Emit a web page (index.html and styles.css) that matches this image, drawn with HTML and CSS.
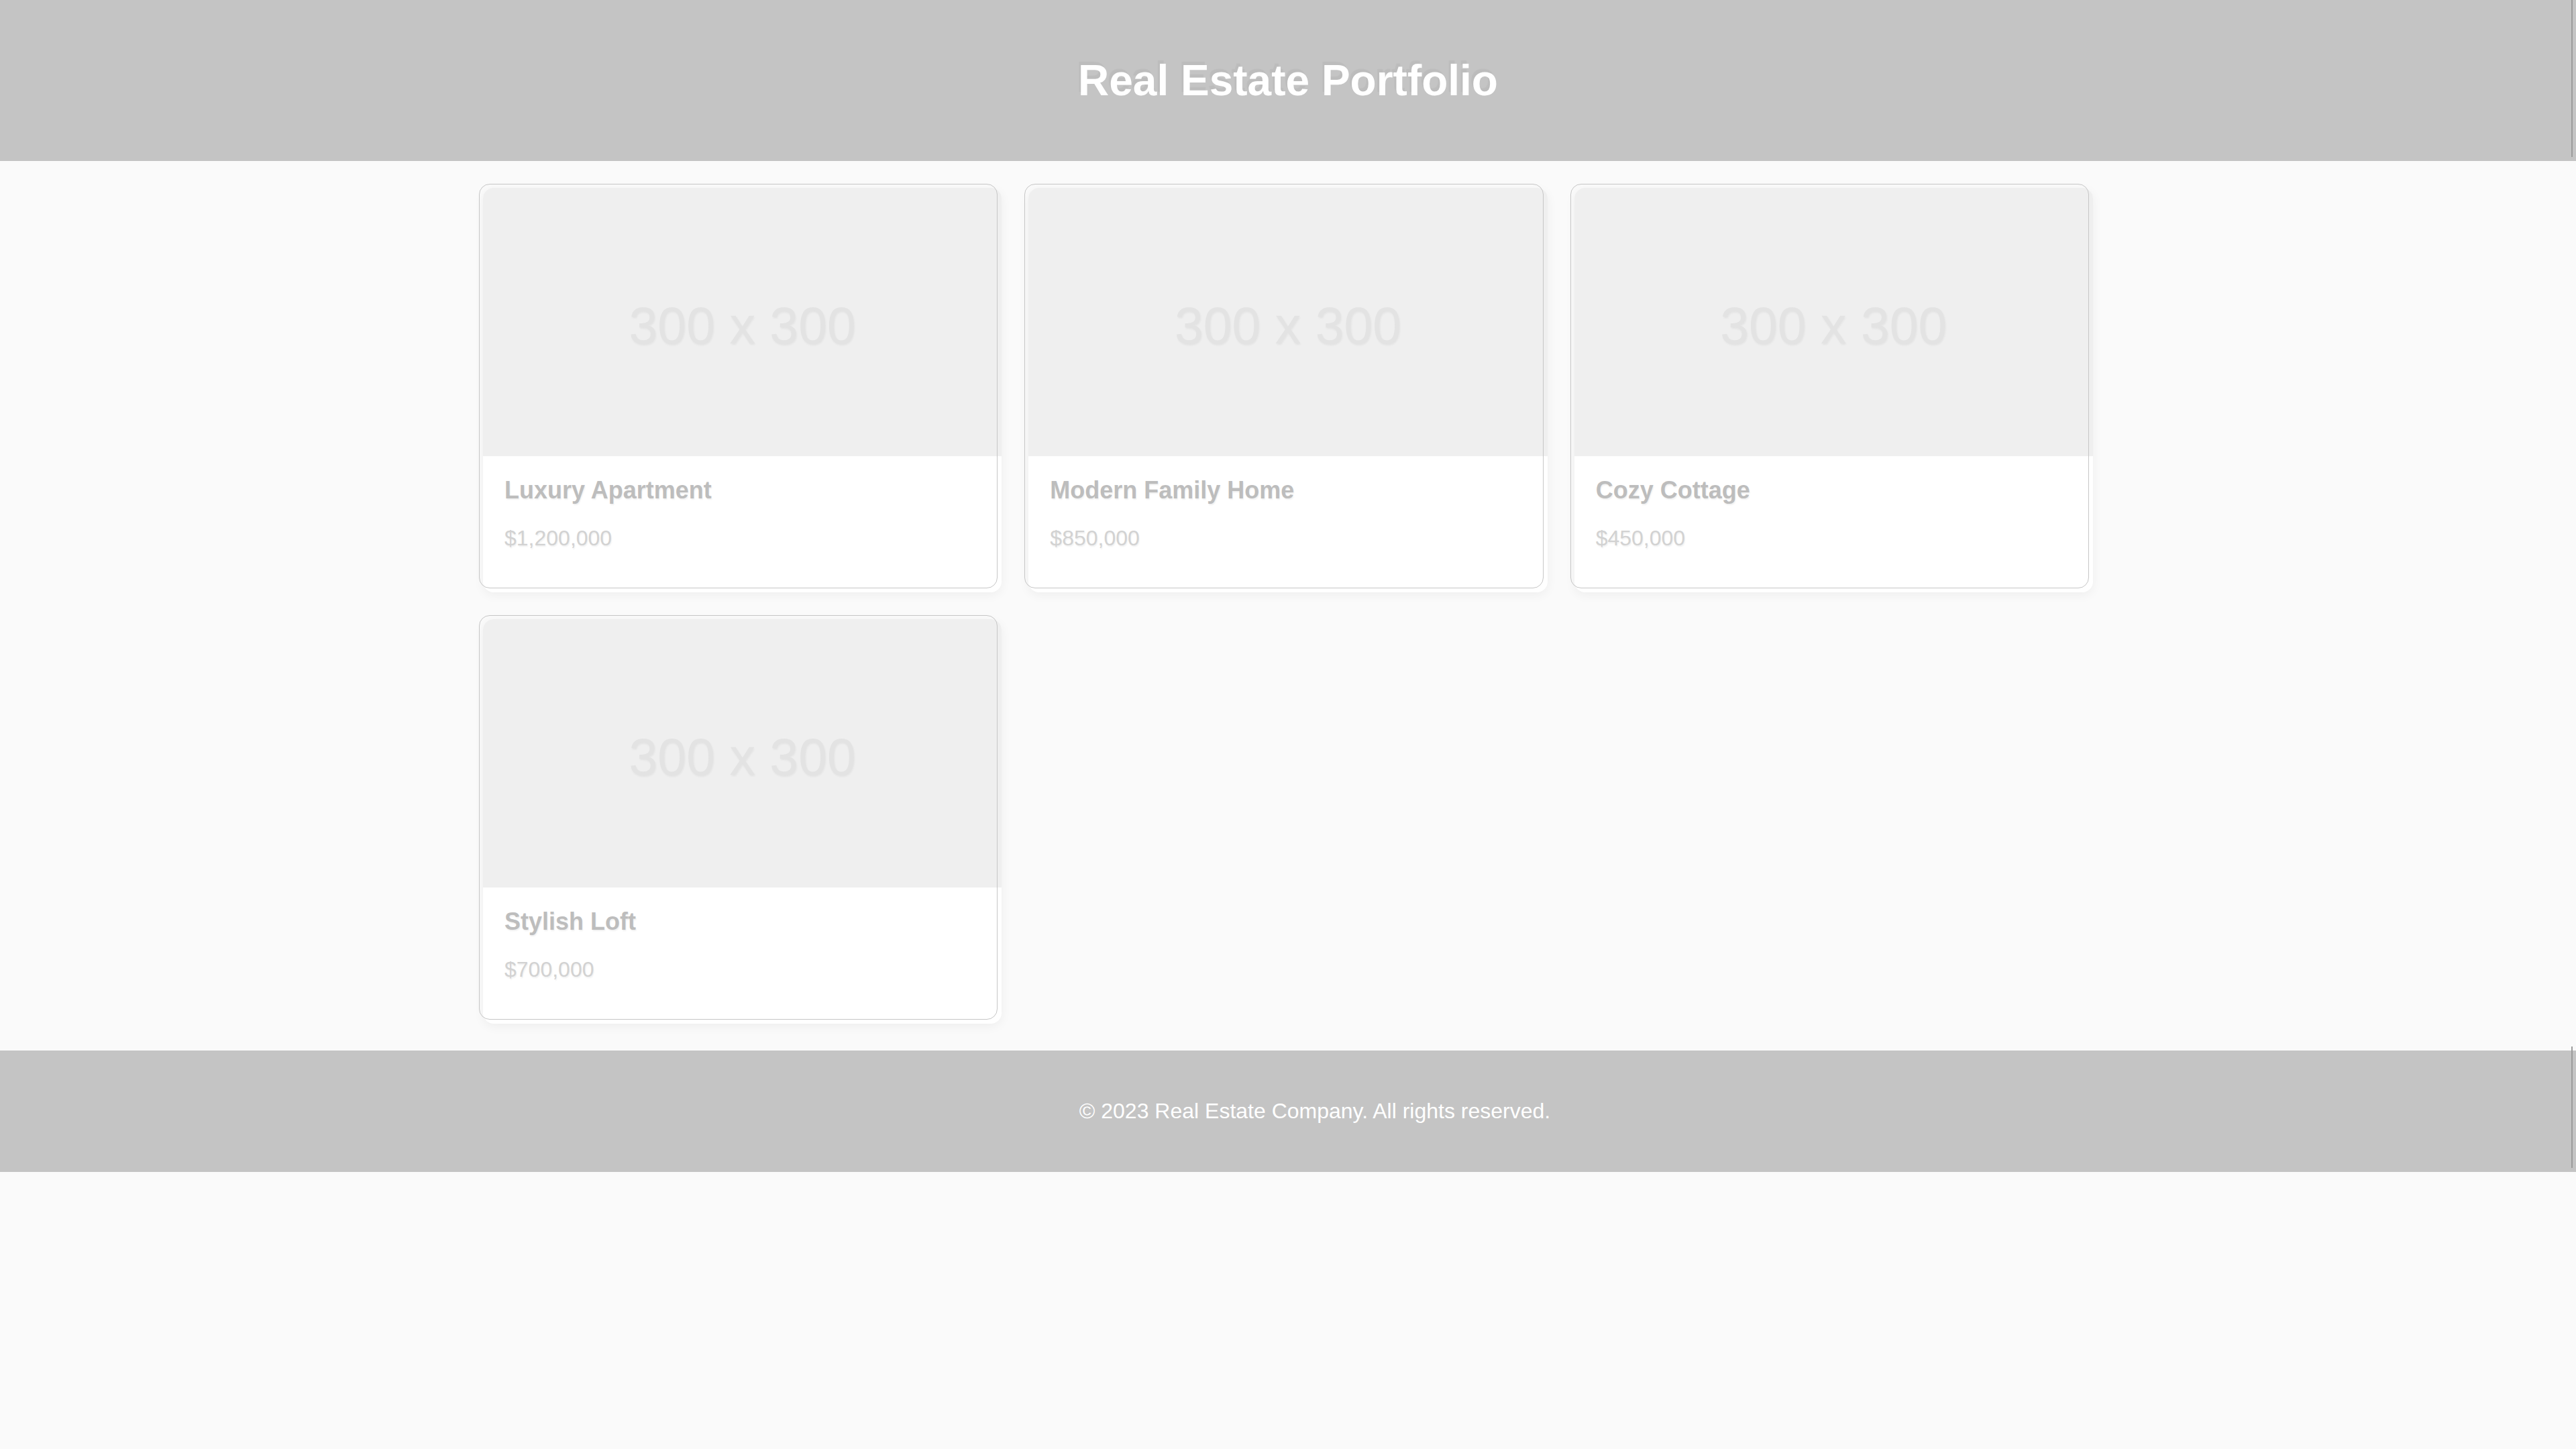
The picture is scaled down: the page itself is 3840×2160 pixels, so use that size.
FILE: index.html
```html
<!DOCTYPE html>
<html lang="en">
<head>
<meta charset="utf-8">
<title>Real Estate Portfolio</title>
<link rel="stylesheet" href="styles.css">
</head>
<body>
<header class="site-header">
  <h1 class="site-title">Real Estate Portfolio</h1>
</header>
<main class="main">
  <div class="grid">
    <div class="card">
      <div class="card-img">300 x 300</div>
      <div class="card-body">
        <h3 class="card-title">Luxury Apartment</h3>
        <p class="card-price">$1,200,000</p>
      </div>
    </div>
    <div class="card">
      <div class="card-img">300 x 300</div>
      <div class="card-body">
        <h3 class="card-title">Modern Family Home</h3>
        <p class="card-price">$850,000</p>
      </div>
    </div>
    <div class="card">
      <div class="card-img">300 x 300</div>
      <div class="card-body">
        <h3 class="card-title">Cozy Cottage</h3>
        <p class="card-price">$450,000</p>
      </div>
    </div>
    <div class="card">
      <div class="card-img">300 x 300</div>
      <div class="card-body">
        <h3 class="card-title">Stylish Loft</h3>
        <p class="card-price">$700,000</p>
      </div>
    </div>
  </div>
</main>
<footer class="site-footer">
  <p class="footer-text">© 2023 Real Estate Company. All rights reserved.</p>
</footer>
</body>
</html>
```

FILE: styles.css
```css
html, body {
  margin: 0;
  padding: 0;
}

body {
  background: #fafafa;
  font-family: "Liberation Sans", Arial, sans-serif;
}

.site-header {
  position: relative;
  background: #c4c4c4;
  padding: 40px;
  text-align: center;
}

.site-header::after,
.site-footer::after {
  content: "";
  position: absolute;
  right: 5px;
  top: -6px;
  bottom: 6px;
  width: 2px;
  background: #9c9c9c;
  pointer-events: none;
}

.site-title {
  margin: 0.67em 0;
  font-size: 64px;
  font-weight: bold;
  color: #ffffff;
  text-shadow: -3px -5px 1px rgba(0, 0, 0, 0.04);
}

.main {
  padding: 40px 0;
}

.grid {
  max-width: 2400px;
  margin: 0 auto;
  display: grid;
  grid-template-columns: repeat(3, 1fr);
  gap: 40px;
}

.card {
  position: relative;
  background: #ffffff;
  border-radius: 16px;
  box-shadow: 0 4px 16px rgba(0, 0, 0, 0.05);
}

.card::before {
  content: "";
  position: absolute;
  left: -6px;
  top: -6px;
  width: 100%;
  height: 100%;
  box-sizing: border-box;
  border: 1px solid #c6c6c6;
  border-radius: 16px;
  pointer-events: none;
  z-index: 1;
}

.card-img {
  box-sizing: border-box;
  height: 400px;
  padding-top: 11px;
  background: #efefef;
  border-radius: 16px 16px 0 0;
  display: flex;
  align-items: center;
  justify-content: center;
  font-size: 77px;
  color: #e3e3e3;
  text-shadow: 1px 2px 3px rgba(0, 0, 0, 0.05);
}

.card-body {
  padding: 30px 32px;
}

.card-title {
  margin: 0;
  font-size: 36px;
  font-weight: bold;
  color: #bdbdbd;
  text-shadow: 1px 2px 2px rgba(0, 0, 0, 0.06);
}

.card-price {
  margin: 32px 0;
  font-size: 32px;
  color: #d2d2d2;
  text-shadow: 1px 2px 2px rgba(0, 0, 0, 0.06);
}

.site-footer {
  position: relative;
  background: #c4c4c4;
  padding: 40px 0 40px 80px;
  text-align: center;
}

.footer-text {
  margin: 32px 0;
  font-size: 32px;
  color: #ffffff;
}
```
